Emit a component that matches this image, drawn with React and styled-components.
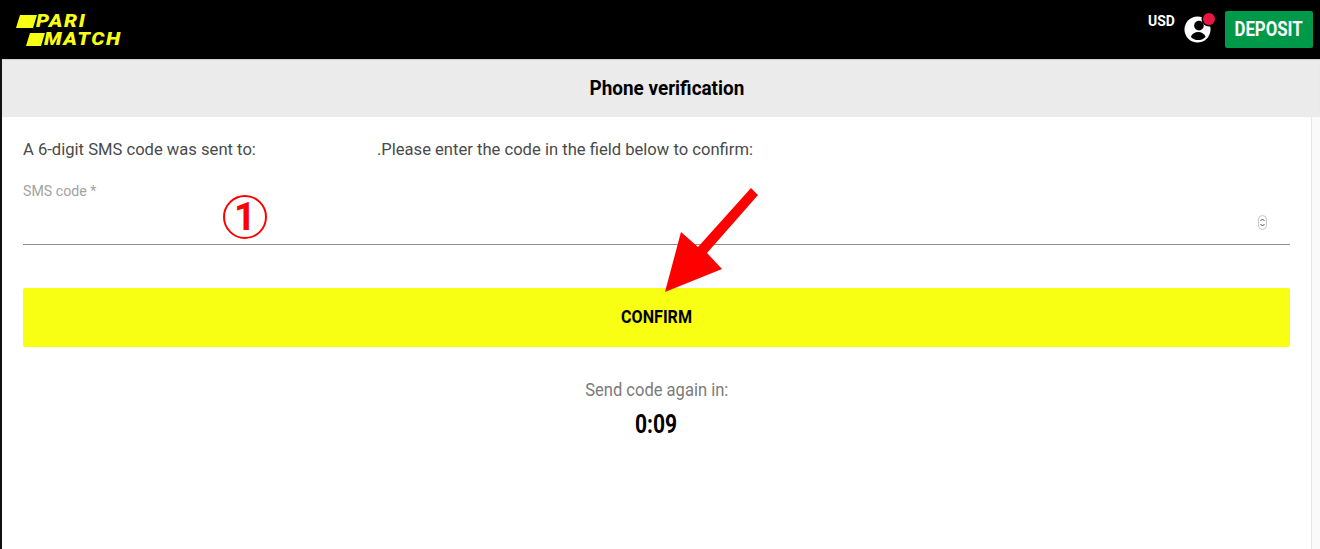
import React from "react";
import styled, { createGlobalStyle } from "styled-components";

const Global = createGlobalStyle`
  html, body { margin: 0; padding: 0; background: #fff; }
  body { font-family: Roboto, "Liberation Sans", sans-serif; overflow: hidden; }
  * { box-sizing: border-box; }
`;
const Page = styled.div`
  width: 1320px; height: 549px; display: flex; flex-direction: column; position: relative; overflow: hidden;
`;
const Header = styled.header`
  height: 59px; background: #000; display: flex; align-items: flex-start; justify-content: space-between;
  padding: 11px 7px 0 16px; flex: none;
`;
const LogoStack = styled.div`
  display: flex; flex-direction: column; width: 106px; margin-top: 1px;
  color: #f8ff13; font: italic 900 19px/18px Roboto, sans-serif;
`;
const LogoRow = styled.div`
  display: flex; align-items: center; height: 18px; letter-spacing: 1.4px;
`;
const LogoBar = styled.span`
  display: block; flex: none; width: ${p => p.$w}px; height: 13px; background: #f8ff13; transform: skewX(-17deg);
  margin-left: ${p => p.$m}px; margin-right: 1px;
`;
const LogoWord = styled.span`
  display: inline-block; transform: scaleX(1.09); transform-origin: left center;
`;
const Right = styled.div`
  display: flex; align-items: flex-start;
`;
const Currency = styled.span`
  color: #fff; font: 700 15.5px/16px Roboto, sans-serif; margin: 2px 9px 0 0; width: 27px;
  transform: scaleX(.9); transform-origin: left; white-space: nowrap;
`;
const UserWrap = styled.div`
  position: relative; width: 32px; height: 32px; margin-right: 9px; margin-top: 2px;
`;
const UserIcon = styled.svg`
  position: absolute; left: 0; top: 3px;
`;
const Dot = styled.span`
  position: absolute; top: 0; right: 1px; width: 12px; height: 12px; border-radius: 50%; background: #e8173f;
  box-shadow: 0 0 0 1.5px #000;
`;
const Deposit = styled.button`
  width: 88px; height: 37px; border: 0; border-radius: 2px; background: #00994a; color: #fff; padding: 0;
  font: 700 20px/37px Roboto, sans-serif; white-space: nowrap;
`;
const Body = styled.main`
  flex: 1; display: flex; flex-direction: column; border-left: 2px solid #111; background: #fff; min-height: 0;
`;
const TitleBar = styled.div`
  height: 58px; background: #ebebeb; box-shadow: inset 0 1px 1px #cfcfcf;
  display: flex; align-items: center; justify-content: center; padding-left: 11px;
  font: 700 21px/24px Roboto, sans-serif; color: #000; flex: none;
`;
const Squeeze = styled.span`
  display: inline-block; transform: scaleX(${p => p.$x || 1});
`;
const Columns = styled.div`
  flex: 1; display: flex; min-height: 0;
`;
const Content = styled.div`
  width: 1310px; border-right: 1px solid #e6e6e6; flex: none;
`;
const Gutter = styled.div`
  flex: 1; background: #fafafa;
`;
const Form = styled.div`
  padding: 22px 21px 0 21px; display: flex; flex-direction: column;
`;
const Message = styled.p`
  margin: 0; font: 400 16.6px/22px Roboto, sans-serif; color: #4a4a4a; display: flex; white-space: nowrap;
`;
const Gap = styled.span` width: 121px; flex: none; `;
const Field = styled.div`
  margin-top: 20px; height: 64px; border-bottom: 1px solid #8f8f8f; position: relative;
`;
const FieldLabel = styled.label`
  display: block; font: 400 14.2px/20px Roboto, sans-serif; color: #a3a3a3;
`;
const Spinner = styled.span`
  position: absolute; right: 23px; top: 34px; width: 9px; height: 15px; border: 1px solid #c9c9c9; border-radius: 5px;
  display: flex; flex-direction: column; align-items: center; justify-content: center; background: #fff;
`;
const Confirm = styled.button`
  margin-top: 43px; height: 59px; width: 100%; border: 0; border-radius: 2px; background: #f8ff13; color: #000; padding: 0;
  font: 700 17.5px/59px Roboto, sans-serif; flex: none;
`;
const Resend = styled.div`
  margin-top: 31px; text-align: center; font: 400 17.5px/24px Roboto, sans-serif; color: #7b7b7b;
`;
const Timer = styled.div`
  margin-top: 9px; text-align: center; font: 700 25px/28px Roboto, sans-serif; color: #000;
`;
const Marker = styled.span`
  position: absolute; left: 223px; top: 195px; width: 44px; height: 44px; border: 2.5px solid #f00; border-radius: 50%;
  color: #f00; display: flex; align-items: center; justify-content: center; font: 700 38px/1 Roboto, sans-serif;
`;
const Arrow = styled.svg`
  position: absolute; left: 660px; top: 185px;
`;

export default function App() {
  return (
    <Page>
      <Global />
      <Header>
        <LogoStack>
          <LogoRow><LogoBar $w={17} $m={2} /><LogoWord>PARI</LogoWord></LogoRow>
          <LogoRow><LogoBar $w={15} $m={12} /><LogoWord>MATCH</LogoWord></LogoRow>
        </LogoStack>
        <Right>
          <Currency>USD</Currency>
          <UserWrap>
            <UserIcon width="27" height="27" viewBox="0 0 28 28">
              <circle cx="14" cy="14" r="13.500" fill="#fff" />
              <circle cx="15.500" cy="10" r="5" fill="#000" />
              <path d="M7 21.500c1.500-3.300 4.500-5 7.800-5s6.200 1.700 7.700 5c-2 2.300-4.700 3.500-7.700 3.500S9 23.800 7 21.500z" fill="#000" />
            </UserIcon>
            <Dot />
          </UserWrap>
          <Deposit><Squeeze $x={0.84}>DEPOSIT</Squeeze></Deposit>
        </Right>
      </Header>
      <Body>
        <TitleBar><Squeeze $x={0.9}>Phone verification</Squeeze></TitleBar>
        <Columns>
          <Content>
            <Form>
              <Message>
                <span>A 6-digit SMS code was sent to:</span>
                <Gap />
                <span>.Please enter the code in the field below to confirm:</span>
              </Message>
              <Field>
                <FieldLabel>SMS code *</FieldLabel>
                <Spinner>
                  <svg width="5" height="11" viewBox="0 0 5 11" fill="none" stroke="#555" strokeWidth="1">
                    <path d="M.5 4L2.500 2L4.500 4M.5 7L2.500 9L4.500 7" />
                  </svg>
                </Spinner>
              </Field>
              <Confirm><Squeeze $x={0.92}>CONFIRM</Squeeze></Confirm>
              <Resend><Squeeze $x={0.945}>Send code again in:</Squeeze></Resend>
              <Timer><Squeeze $x={0.84}>0:09</Squeeze></Timer>
            </Form>
          </Content>
          <Gutter />
        </Columns>
      </Body>
      <Marker>1</Marker>
      <Arrow width="110" height="115" viewBox="0 0 110 115">
        <path d="M91 3L98 10L47 68L62 84L5 107L21 47L38 62z" fill="#f00" />
      </Arrow>
    </Page>
  );
}
